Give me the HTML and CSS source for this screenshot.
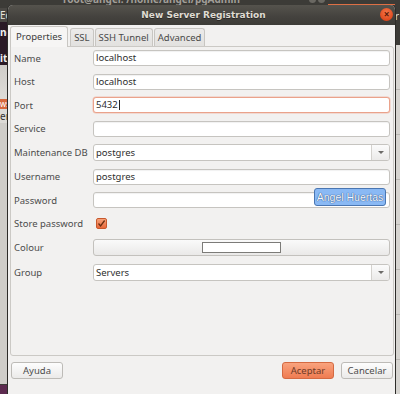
FILE: index.html
```html
<!DOCTYPE html>
<html lang="en">
<head>
<meta charset="utf-8">
<title>New Server Registration</title>
<link rel="stylesheet" href="styles.css">
</head>
<body>
<div class="desktop">
  <div class="bg-top">
    <span class="term-title">root@angel: /home/angel/pgAdmin</span>
    <span class="wbtn wbtn-1"></span>
    <span class="wbtn wbtn-2"></span>
    <span class="orange-line"></span>
  </div>
  <div class="bg-left">
    <div class="bl-a">Ec</div>
    <div class="bl-b"><span>nd</span><span>it</span></div>
    <div class="bl-c"></div>
    <div class="bl-d">ws</div>
    <div class="bl-e">er</div>
    <div class="bl-f"></div>
    <div class="bl-g"></div>
  </div>
  <div class="bg-right">
    <div class="br-a">r</div>
    <div class="br-b"></div>
  </div>

  <div class="dialog">
    <div class="titlebar">
      <span class="title">New Server Registration</span>
      <span class="close">×</span>
    </div>
    <div class="content">
      <div class="tabs">
        <div class="tab active">Properties</div>
        <div class="tab">SSL</div>
        <div class="tab">SSH Tunnel</div>
        <div class="tab">Advanced</div>
      </div>
      <div class="pane">
        <div class="form">
          <label class="lbl">Name</label>
          <div class="field">localhost</div>

          <label class="lbl">Host</label>
          <div class="field">localhost</div>

          <label class="lbl">Port</label>
          <div class="field focus">5432<span class="caret"></span></div>

          <label class="lbl">Service</label>
          <div class="field"></div>

          <label class="lbl">Maintenance DB</label>
          <div class="combo"><span class="combo-text">postgres</span><span class="combo-btn"><span class="arrow"></span></span></div>

          <label class="lbl">Username</label>
          <div class="field">postgres</div>

          <label class="lbl">Password</label>
          <div class="field"></div>

          <label class="lbl">Store password</label>
          <div class="check-cell">
            <span class="checkbox">
              <svg width="9" height="9" viewBox="0 0 9 9"><path d="M1.5 4.5 L3.6 7 L7.6 1.5" fill="none" stroke="#6b2e12" stroke-width="1.3"/></svg>
            </span>
          </div>

          <label class="lbl">Colour</label>
          <div class="colour-btn"><span class="swatch"></span></div>

          <label class="lbl">Group</label>
          <div class="combo"><span class="combo-text">Servers</span><span class="combo-btn"><span class="arrow"></span></span></div>
        </div>
      </div>
      <div class="buttons">
        <button class="btn">Ayuda</button>
        <span class="spacer"></span>
        <button class="btn primary">Aceptar</button>
        <button class="btn">Cancelar</button>
      </div>
    </div>
  </div>

  <div class="tooltip">Angel Huertas</div>
</div>
</body>
</html>
```

FILE: styles.css
```css
* { box-sizing: border-box; }

html, body {
  margin: 0;
  padding: 0;
  width: 400px;
  height: 394px;
  overflow: hidden;
  background: #3c3b37;
  font-family: "Noto Sans", "Open Sans", "DejaVu Sans", sans-serif;
  font-size: 9.5px;
  color: #3c3c3c;
}

.desktop {
  position: relative;
  width: 400px;
  height: 394px;
  overflow: hidden;
}

/* ---------- background windows ---------- */
.bg-top {
  position: absolute;
  left: 0;
  top: 0;
  width: 400px;
  height: 8px;
  background: #3c3b37;
  overflow: hidden;
}
.term-title {
  position: absolute;
  left: 63px;
  top: -8px;
  font-size: 10px;
  font-weight: bold;
  color: #a19e97;
  white-space: nowrap;
}
.wbtn {
  position: absolute;
  top: -4px;
  width: 7px;
  height: 7px;
  border-radius: 50%;
  background: #6a6862;
}
.wbtn-1 { left: 309px; }
.wbtn-2 { left: 318px; }
.orange-line {
  position: absolute;
  left: 328px;
  top: 4px;
  width: 72px;
  height: 1px;
  background: #dd6f45;
}

.bg-left {
  position: absolute;
  left: 0;
  top: 8px;
  width: 8px;
  height: 386px;
  display: flex;
  flex-direction: column;
  font-size: 10px;
  line-height: 1;
  overflow: hidden;
}
.bl-a {
  height: 14px;
  background: #4a4844;
  color: #e6e3dc;
  padding-top: 2px;
}
.bl-b {
  height: 43px;
  background: #2a1a26;
  color: #f0f0f0;
  display: flex;
  flex-direction: column;
  justify-content: space-between;
  padding: 5px 0 2px 0;
  font-weight: bold;
}
.bl-c {
  height: 34px;
  background: linear-gradient(#cfcdc9, #dedcd8);
}
.bl-d {
  height: 10px;
  background: #d8683c;
  color: #fff;
  font-size: 8px;
  line-height: 10px;
}
.bl-e {
  height: 14px;
  background: #dcdad6;
  color: #333;
  line-height: 14px;
}
.bl-f {
  flex: 1;
  background: #cfcdc9;
  border-bottom: 1px solid #3c3b37;
}
.bl-g {
  height: 9px;
  background: #5c2a4f;
}

.bg-right {
  position: absolute;
  left: 395px;
  top: 0;
  width: 5px;
  height: 394px;
  display: flex;
  flex-direction: column;
}
.br-a {
  height: 45px;
  background: #3c3b37;
  color: #ddd;
  font-size: 10px;
  padding-top: 9px;
}
.br-b {
  flex: 1;
  background: repeating-linear-gradient(#d6d4d0 0 44px, #b9b7b3 44px 45px);
}

/* ---------- dialog ---------- */
.dialog {
  position: absolute;
  left: 8px;
  top: 5px;
  width: 387px;
  height: 395px;
  background: #f2f1f0;
  border-radius: 5px 5px 0 0;
  box-shadow: -1px 0 0 #2d2c29, 1px 0 0 #2d2c29;
  display: flex;
  flex-direction: column;
}

.titlebar {
  height: 20px;
  background: linear-gradient(#55534d, #44423e 60%, #3d3c38);
  border-radius: 5px 5px 0 0;
  position: relative;
  display: flex;
  align-items: center;
  justify-content: center;
}
.title {
  font-family: "DejaVu Sans", sans-serif;
  font-weight: bold;
  font-size: 9px;
  color: #dfdbd2;
  text-shadow: 0 1px 0 #2a2926;
  padding-left: 4px;
}
.close {
  position: absolute;
  right: 2px;
  top: 3px;
  width: 13px;
  height: 13px;
  border-radius: 50%;
  background: radial-gradient(circle at 50% 35%, #f5774a, #df4a1e 70%, #c43d16);
  color: #5a1a08;
  font-size: 10px;
  line-height: 12px;
  text-align: center;
  font-weight: bold;
}

.content {
  flex: 1;
  display: flex;
  flex-direction: column;
  padding: 1px 1px 0 2px;
}

/* tabs */
.tabs {
  display: flex;
  align-items: flex-end;
  gap: 1px;
  height: 21px;
  margin-bottom: -1px;
  position: relative;
  z-index: 1;
}
.tab {
  height: 18px;
  padding: 0 3px;
  border: 1px solid #c8c6c2;
  border-bottom: none;
  border-radius: 3px 3px 0 0;
  background: linear-gradient(#ecebea, #e2e1df);
  color: #4a4a4a;
  line-height: 17px;
  margin-bottom: 1px;
}
.tab.active {
  height: 21px;
  padding: 0 5px;
  margin-bottom: 0;
  background: #f6f5f4;
  color: #3c3c3c;
  line-height: 20px;
  margin-right: 1px;
}

.pane {
  height: 310px;
  border: 1px solid #cbc9c5;
  border-radius: 0 3px 3px 3px;
  background: #f2f1f0;
  padding: 3px 3px 0 3px;
}

.form {
  display: grid;
  grid-template-columns: 79px 1fr;
  row-gap: 7.5px;
  align-items: center;
}
.lbl {
  color: #4c4c4c;
  white-space: nowrap;
}

.field {
  height: 16px;
  background: #fff;
  border: 1px solid #c6c4c0;
  border-radius: 3px;
  box-shadow: inset 0 1px 1px rgba(0,0,0,0.06);
  padding: 0 2px;
  line-height: 14px;
  color: #2e2e2e;
  display: flex;
  align-items: center;
}
.field.focus {
  border-color: #eaa28b;
  box-shadow: 0 0 0 0.5px rgba(240,150,120,0.5);
}
.caret {
  display: inline-block;
  width: 1px;
  height: 10px;
  background: #222;
  margin-left: 1px;
}

.combo {
  height: 17px;
  background: #fff;
  border: 1px solid #c6c4c0;
  border-radius: 3px;
  display: flex;
  align-items: stretch;
  color: #2e2e2e;
}
.combo-text {
  flex: 1;
  padding-left: 2px;
  line-height: 15px;
}
.combo-btn {
  width: 18px;
  border-left: 1px solid #d4d2ce;
  background: linear-gradient(#fbfbfb, #ebeae9);
  border-radius: 0 2px 2px 0;
  display: flex;
  align-items: center;
  justify-content: center;
}
.arrow {
  width: 0;
  height: 0;
  border-left: 3px solid transparent;
  border-right: 3px solid transparent;
  border-top: 3px solid #6c6b68;
}

.check-cell {
  height: 16px;
  display: flex;
  align-items: center;
  padding-left: 3px;
}
.checkbox {
  width: 11px;
  height: 11px;
  border: 1px solid #c8582c;
  border-radius: 2px;
  background: linear-gradient(#f6a27a, #e8683a);
  display: flex;
  align-items: center;
  justify-content: center;
}

.colour-btn {
  height: 17px;
  border: 1px solid #c3c1bd;
  border-radius: 3px;
  background: linear-gradient(#fafafa, #eae9e8);
  display: flex;
  align-items: center;
  justify-content: center;
}
.swatch {
  width: 79px;
  height: 11px;
  background: #fff;
  border: 1px solid #7c7b78;
}

/* buttons */
.buttons {
  display: flex;
  align-items: center;
  gap: 7px;
  margin-top: 6px;
  padding: 0 1px 0 1px;
}
.spacer { flex: 1; }
.btn {
  width: 52px;
  height: 17px;
  border: 1px solid #bdbbb7;
  border-radius: 3px;
  background: linear-gradient(#fdfdfd, #ebeae9);
  font-family: inherit;
  font-size: 9.5px;
  color: #4c4c4c;
  padding: 0;
  line-height: 15px;
}
.btn.primary {
  background: linear-gradient(#f9a37e, #ef7c52);
  border-color: #d46a42;
  color: #6f3a26;
}

/* tooltip */
.tooltip {
  position: absolute;
  left: 314px;
  top: 188px;
  width: 72px;
  height: 18px;
  background: #8ab9f4;
  border: 1px solid #4a76b2;
  border-radius: 3px;
  color: #f4f8ff;
  text-shadow: 0 0 1px #2b4e80, 0 0 1px #2b4e80;
  font-family: "Liberation Sans", sans-serif;
  font-size: 10.5px;
  line-height: 16px;
  text-align: center;
  white-space: nowrap;
}
```
